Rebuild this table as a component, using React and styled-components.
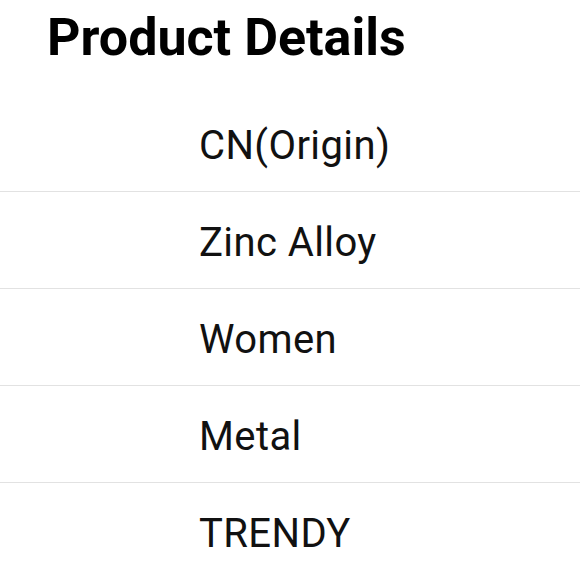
import React from "react";
import styled, { createGlobalStyle } from "styled-components";

const Global = createGlobalStyle`
  html, body { margin: 0; padding: 0; background: #ffffff; }
  body { font-family: Roboto, "Noto Sans", sans-serif; color: #000; }
`;

const Page = styled.div`
  width: 580px;
  height: 580px;
  overflow: hidden;
  background: #fff;
  display: flex;
  flex-direction: column;
`;

const Title = styled.h1`
  margin: 0;
  padding: 8px 0 0 47px;
  height: 95px;
  box-sizing: border-box;
  flex: none;
  font-family: Roboto, sans-serif;
  font-weight: 700;
  font-size: 52px;
  line-height: 60px;
  color: #000;
`;

const List = styled.div`
  display: flex;
  flex-direction: column;
`;

const Row = styled.div`
  padding: 31px 0 25px 199px;
  height: 40px;
  flex: none;
  font-size: 40px;
  line-height: 40px;
  letter-spacing: 0.4px;
  color: #111;
  white-space: nowrap;
  border-bottom: ${(p) => (p.$last ? "none" : "1px solid #e2e2e2")};
`;

const values = ["CN(Origin)", "Zinc Alloy", "Women", "Metal", "TRENDY"];

export default function App() {
  return (
    <Page>
      <Global />
      <Title>Product Details</Title>
      <List>
        {values.map((v, i) => (
          <Row key={v} $last={i === values.length - 1}>
            {v}
          </Row>
        ))}
      </List>
    </Page>
  );
}
